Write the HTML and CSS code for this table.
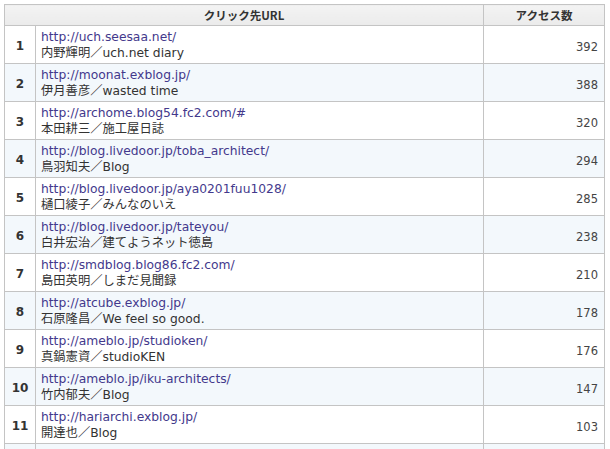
FILE: index.html
```html
<!DOCTYPE html>
<html lang="ja">
<head>
<meta charset="utf-8">
<title>クリック先URL</title>
<link rel="stylesheet" href="styles.css">
</head>
<body>
<div class="wrap">
<table class="rank-table">
  <colgroup>
    <col class="c-rank">
    <col class="c-url">
    <col class="c-count">
  </colgroup>
  <thead>
    <tr>
      <th colspan="2">クリック先URL</th>
      <th>アクセス数</th>
    </tr>
  </thead>
  <tbody>
    <tr><td class="rank">1</td><td class="url"><a href="#">http://uch.seesaa.net/</a><br>内野輝明／uch.net diary</td><td class="count">392</td></tr>
    <tr class="alt"><td class="rank">2</td><td class="url"><a href="#">http://moonat.exblog.jp/</a><br>伊月善彦／wasted time</td><td class="count">388</td></tr>
    <tr><td class="rank">3</td><td class="url"><a href="#">http://archome.blog54.fc2.com/#</a><br>本田耕三／施工屋日誌</td><td class="count">320</td></tr>
    <tr class="alt"><td class="rank">4</td><td class="url"><a href="#">http://blog.livedoor.jp/toba_architect/</a><br>鳥羽知夫／Blog</td><td class="count">294</td></tr>
    <tr><td class="rank">5</td><td class="url"><a href="#">http://blog.livedoor.jp/aya0201fuu1028/</a><br>樋口綾子／みんなのいえ</td><td class="count">285</td></tr>
    <tr class="alt"><td class="rank">6</td><td class="url"><a href="#">http://blog.livedoor.jp/tateyou/</a><br>白井宏治／建てようネット徳島</td><td class="count">238</td></tr>
    <tr><td class="rank">7</td><td class="url"><a href="#">http://smdblog.blog86.fc2.com/</a><br>島田英明／しまだ見聞録</td><td class="count">210</td></tr>
    <tr class="alt"><td class="rank">8</td><td class="url"><a href="#">http://atcube.exblog.jp/</a><br>石原隆昌／We feel so good.</td><td class="count">178</td></tr>
    <tr><td class="rank">9</td><td class="url"><a href="#">http://ameblo.jp/studioken/</a><br>真鍋憲資／studioKEN</td><td class="count">176</td></tr>
    <tr class="alt"><td class="rank">10</td><td class="url"><a href="#">http://ameblo.jp/iku-architects/</a><br>竹内郁夫／Blog</td><td class="count">147</td></tr>
    <tr><td class="rank">11</td><td class="url"><a href="#">http://hariarchi.exblog.jp/</a><br>開達也／Blog</td><td class="count">103</td></tr>
    <tr class="alt"><td class="rank"></td><td class="url"></td><td class="count"></td></tr>
  </tbody>
</table>
</div>
</body>
</html>
```
FILE: styles.css
```css
html, body {
  margin: 0;
  padding: 0;
  background: #ffffff;
}

body {
  font-family: "DejaVu Sans", Verdana, "Noto Sans CJK JP", sans-serif;
  font-size: 12px;
  color: #333333;
}

.wrap {
  padding: 4px 0 0 4px;
}

.rank-table {
  border-collapse: collapse;
  table-layout: fixed;
  width: 600px;
}

.c-rank { width: 31px; }
.c-url { width: 448px; }
.c-count { width: 121px; }

.rank-table th,
.rank-table td {
  border: 1px solid #c4c4c4;
}

.rank-table th {
  height: 20px;
  padding: 0;
  background: linear-gradient(#f3f3f3, #ebebeb);
  font-weight: bold;
  font-size: 11.5px;
  color: #333333;
  text-align: center;
  vertical-align: middle;
  font-family: "Noto Sans CJK JP", "DejaVu Sans", sans-serif;
}

.rank-table td {
  height: 38px;
  box-sizing: border-box;
  vertical-align: middle;
}

.rank-table tr.alt td {
  background: #f3f8fc;
}

.rank {
  text-align: center;
  font-weight: bold;
  font-size: 12px;
  color: #333333;
  padding: 3px 0 0 0;
}

.url {
  padding: 2px 4px 2px 5px;
  line-height: 16px;
  font-size: 12.3px;
  color: #333333;
  white-space: nowrap;
  overflow: hidden;
}

.url a {
  color: #43398c;
  text-decoration: none;
}

.count {
  text-align: right;
  padding: 4px 6px 0 0;
  font-size: 11.5px;
  color: #444444;
}
```
